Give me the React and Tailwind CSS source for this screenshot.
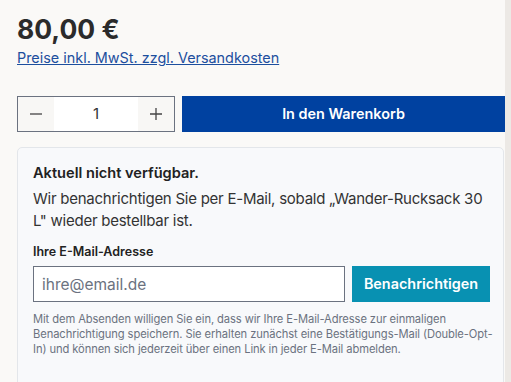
import React from "react";

function QuantityBox() {
  return (
    <div className="flex h-[36px] w-[158px] border border-[#6b7280] bg-white">
      <button className="flex w-[36px] items-center justify-center bg-[#f8f7f5]">
        <svg width="14" height="14" viewBox="0 0 14 14" fill="none" stroke="#444" strokeWidth="1.3">
          <path d="M1 7h12" />
        </svg>
      </button>
      <div className="flex flex-1 items-center justify-center text-[15px] text-[#333]">1</div>
      <button className="flex w-[36px] items-center justify-center bg-[#f8f7f5]">
        <svg width="14" height="14" viewBox="0 0 14 14" fill="none" stroke="#444" strokeWidth="1.3">
          <path d="M1 7h12M7 1v12" />
        </svg>
      </button>
    </div>
  );
}

export default function App() {
  return (
    <div className="flex h-[382px] w-[511px] overflow-hidden bg-[#faf9f7] font-['Inter',sans-serif]">
      <main className="w-[505px] pl-[17px] pt-[12px]">
        <div className="text-[26.5px] font-bold leading-[34px] text-[#2b2b2b]">80,00 €</div>
        <a href="#" className="mt-[3px] block text-[14.4px] leading-[18px] text-[#1d4f9e] underline">
          Preise inkl. MwSt. zzgl. Versandkosten
        </a>
        <div className="mt-[29px] flex gap-[7px]">
          <QuantityBox />
          <button className="h-[36px] flex-1 bg-[#0041a0] text-[14.4px] font-semibold text-white">
            In den Warenkorb
          </button>
        </div>
        <section className="mt-[15px] h-[260px] w-[487px] rounded-t-[5px] border border-[#e3e6ea] bg-[#f8f9fb] pl-[15px] pr-[8px] pt-[14px]">
          <h3 className="mb-[4px] text-[14.6px] font-semibold leading-[22px] text-[#222]">Aktuell nicht verfügbar.</h3>
          <p className="text-[15px] leading-[22px] tracking-[-0.25px] text-[#333]">
            Wir benachrichtigen Sie per E-Mail, sobald „Wander-Rucksack 30 L" wieder bestellbar ist.
          </p>
          <label className="mt-[11px] block text-[12.5px] font-semibold leading-[18px] text-[#222]">
            Ihre E-Mail-Adresse
          </label>
          <div className="mt-[5px] flex gap-[7px]">
            <input
              type="email"
              placeholder="ihre@email.de"
              className="h-[36px] w-[312px] border border-[#6b7280] bg-white px-[8px] text-[15.5px] text-[#333] placeholder:text-[#6b7280]"
            />
            <button className="h-[36px] w-[138px] bg-[#0891b2] text-[14.4px] font-semibold text-white">
              Benachrichtigen
            </button>
          </div>
          <p className="mt-[10px] text-[11.2px] leading-[15px] tracking-[-0.1px] text-[#6b7280]">
            Mit dem Absenden willigen Sie ein, dass wir Ihre E-Mail-Adresse zur einmaligen Benachrichtigung speichern. Sie erhalten zunächst eine Bestätigungs-Mail{" "}
            <span className="whitespace-nowrap">(Double-Opt-</span>In) und können sich jederzeit über einen Link in jeder E-Mail abmelden.
          </p>
        </section>
      </main>
      <div className="w-[6px] bg-[#ece9e5]" />
    </div>
  );
}
